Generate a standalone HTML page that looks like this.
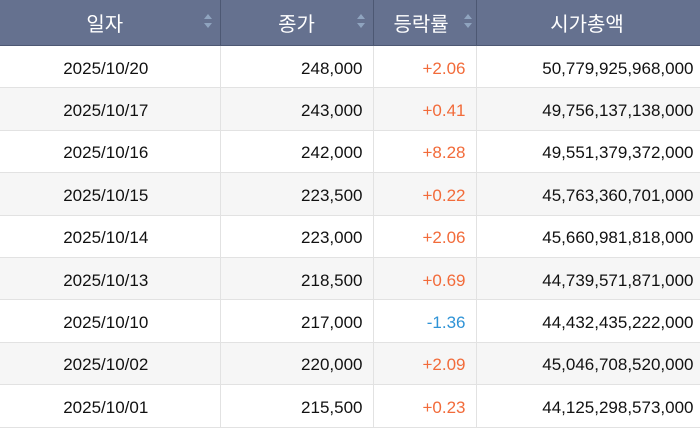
<!DOCTYPE html>
<html><head><meta charset="utf-8"><style>
body{margin:0;width:700px;height:424px;overflow:hidden;background:#fff;font-family:"Liberation Sans","Noto Sans CJK KR",sans-serif;}
table{border-collapse:collapse;table-layout:fixed;width:706px;}
th{background:#65718f;color:#fff;font-weight:normal;font-size:20px;height:45px;padding:0;border-right:1px solid #4d5873;border-bottom:1px solid #4d5873;position:relative;}
td{height:41.4px;padding:0;font-size:17px;color:#111;border-right:1px solid #e2e2e2;border-bottom:1px solid #e2e2e2;vertical-align:middle;}
td span{position:relative;top:2px}
tr:nth-child(odd) td{background:#f6f6f6;}
.c{text-align:center;padding-right:8px}
.r{text-align:right;padding-right:10px}
.r4{text-align:right;padding-right:12px}
.up{color:#f26b3a}.dn{color:#2f93d6}
.s{position:absolute;right:8px;top:14px;width:8px;height:16px}
.s:before{content:"";position:absolute;left:0;top:0;border:4px solid transparent;border-bottom:5px solid #8fa4bf;border-top:0}
.s:after{content:"";position:absolute;left:0;top:9px;border:4px solid transparent;border-top:5px solid #8fa4bf;border-bottom:0}
</style></head><body>
<table>
<col style="width:220px"><col style="width:153px"><col style="width:103px"><col style="width:230px">
<tr><th style="padding-right:10px">일자<i class="s"></i></th><th>종가<i class="s"></i></th><th style="text-align:left;padding-left:20px">등락률<i class="s" style="right:4px"></i></th><th style="padding-right:8px">시가총액</th></tr>
<tr><td class="c"><span>2025/10/20</span></td><td class="r"><span>248,000</span></td><td class="r up"><span>+2.06</span></td><td class="r4"><span>50,779,925,968,000</span></td></tr>
<tr><td class="c"><span>2025/10/17</span></td><td class="r"><span>243,000</span></td><td class="r up"><span>+0.41</span></td><td class="r4"><span>49,756,137,138,000</span></td></tr>
<tr><td class="c"><span>2025/10/16</span></td><td class="r"><span>242,000</span></td><td class="r up"><span>+8.28</span></td><td class="r4"><span>49,551,379,372,000</span></td></tr>
<tr><td class="c"><span>2025/10/15</span></td><td class="r"><span>223,500</span></td><td class="r up"><span>+0.22</span></td><td class="r4"><span>45,763,360,701,000</span></td></tr>
<tr><td class="c"><span>2025/10/14</span></td><td class="r"><span>223,000</span></td><td class="r up"><span>+2.06</span></td><td class="r4"><span>45,660,981,818,000</span></td></tr>
<tr><td class="c"><span>2025/10/13</span></td><td class="r"><span>218,500</span></td><td class="r up"><span>+0.69</span></td><td class="r4"><span>44,739,571,871,000</span></td></tr>
<tr><td class="c"><span>2025/10/10</span></td><td class="r"><span>217,000</span></td><td class="r dn"><span>-1.36</span></td><td class="r4"><span>44,432,435,222,000</span></td></tr>
<tr><td class="c"><span>2025/10/02</span></td><td class="r"><span>220,000</span></td><td class="r up"><span>+2.09</span></td><td class="r4"><span>45,046,708,520,000</span></td></tr>
<tr><td class="c"><span>2025/10/01</span></td><td class="r"><span>215,500</span></td><td class="r up"><span>+0.23</span></td><td class="r4"><span>44,125,298,573,000</span></td></tr>
</table>
</body></html>
